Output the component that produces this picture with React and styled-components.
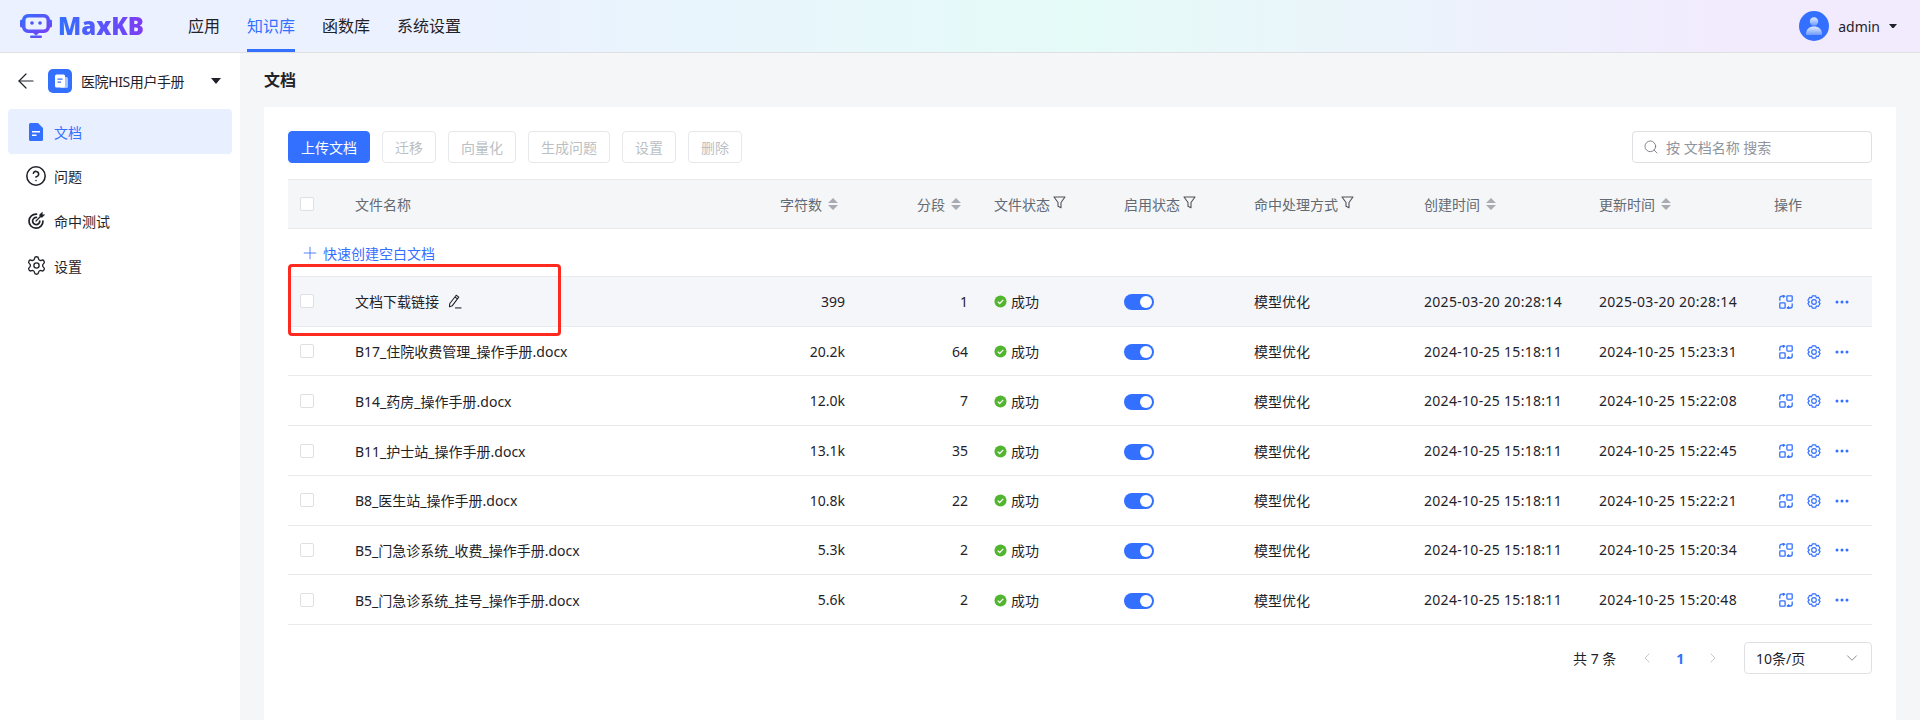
import styled, { createGlobalStyle } from "styled-components"
import { ArrowLeft, ChevronDown, ChevronLeft, ChevronRight, CircleHelp, Plus, Search, Settings } from "lucide-react"

const docs = [
    { name: "文档下载链接", chars: "399", parts: "1", created: "2025-03-20 20:28:14", updated: "2025-03-20 20:28:14", hover: true },
    { name: "B17_住院收费管理_操作手册.docx", chars: "20.2k", parts: "64", created: "2024-10-25 15:18:11", updated: "2024-10-25 15:23:31" },
    { name: "B14_药房_操作手册.docx", chars: "12.0k", parts: "7", created: "2024-10-25 15:18:11", updated: "2024-10-25 15:22:08" },
    { name: "B11_护士站_操作手册.docx", chars: "13.1k", parts: "35", created: "2024-10-25 15:18:11", updated: "2024-10-25 15:22:45" },
    { name: "B8_医生站_操作手册.docx", chars: "10.8k", parts: "22", created: "2024-10-25 15:18:11", updated: "2024-10-25 15:22:21" },
    { name: "B5_门急诊系统_收费_操作手册.docx", chars: "5.3k", parts: "2", created: "2024-10-25 15:18:11", updated: "2024-10-25 15:20:34" },
    { name: "B5_门急诊系统_挂号_操作手册.docx", chars: "5.6k", parts: "2", created: "2024-10-25 15:18:11", updated: "2024-10-25 15:20:48" },
]

const Caret = ({ size = 10 }) => (
    <svg width={size} height={size * 0.6} viewBox="0 0 10 6"><path d="M0 0h10L5 6z" fill="currentColor" /></svg>
)

const SortIcon = () => (
    <SortMark width="10" height="12" viewBox="0 0 10 12">
        <path d="M5 0l5 5H0zM0 7h10l-5 5z" fill="currentColor" />
    </SortMark>
)

const FilterIcon = () => (
    <FilterMark width="13" height="13" viewBox="0 0 13 13" fill="none" stroke="currentColor" strokeWidth="1.100">
        <path d="M1 1h11L8 6.500v5.200L5 10.200V6.500z" strokeLinejoin="round" />
    </FilterMark>
)

const GridSyncIcon = () => (
    <svg width="14" height="14" viewBox="0 0 14 14" fill="none" stroke="currentColor" strokeWidth="1.300">
        <rect x="7.900" y="0.800" width="5.300" height="5.300" rx="0.800" />
        <rect x="0.800" y="7.900" width="5.300" height="5.300" rx="0.800" />
        <path d="M0.800 5.800V3.200a2 2 0 0 1 2-2h2.600M3.900 0L5.600 1.200 3.900 2.600" />
        <path d="M13.200 8.400V11a2 2 0 0 1-2 2H8.600M10.100 11.600L8.400 13l1.700 1.200" />
    </svg>
)

const GearIcon = () => (
    <svg width="14" height="14" viewBox="1.200 0.800 11.600 12" fill="none" stroke="currentColor" strokeWidth="1" strokeLinejoin="round">
        <path d="M5.500 0.800h3l.5 1.700 1.700-.5 1.500 2.600-1.200 1.400 1.200 1.300-1.500 2.600-1.700-.5-.5 1.800h-3l-.5-1.800-1.700.5L1.800 7.300 3 6 1.800 4.600 3.300 2 5 2.500z" transform="translate(0 0.800)" />
        <circle cx="7" cy="6.800" r="2" />
    </svg>
)

const DotsIcon = () => (
    <svg width="14" height="14" viewBox="0 0 14 14" fill="currentColor">
        <circle cx="2" cy="7" r="1.500" />
        <circle cx="7" cy="7" r="1.500" />
        <circle cx="12" cy="7" r="1.500" />
    </svg>
)

const PencilIcon = () => (
    <PencilMark width="15" height="15" viewBox="0 0 14 14" fill="none" stroke="currentColor" strokeWidth="1">
        <path d="M8.600 1.200l2.400 1.700-6 8-2.700 1 .2-2.800zM7.400 2.800l2.400 1.800" strokeLinejoin="round" />
        <path d="M7.500 13h6" />
    </PencilMark>
)

const DocFill = () => (
    <svg width="14" height="18" viewBox="0 0 14 18">
        <path d="M1.500 0H9l5 5v11.500a1.500 1.500 0 0 1-1.500 1.500h-11A1.500 1.500 0 0 1 0 16.500v-15A1.500 1.500 0 0 1 1.500 0z" fill="#3370FF" />
        <path d="M3 8h8v1.500H3zM3 11.500h4.500V13H3z" fill="#fff" />
    </svg>
)

const TargetIcon = () => (
    <svg width="18" height="18" viewBox="0 0 18 18" fill="none" stroke="#1F2329" strokeWidth="1.700" strokeLinecap="round">
        <path d="M9.500 2.200A7 7 0 1 0 16 9" />
        <path d="M9.500 5.400A3.600 3.600 0 1 0 12.800 9" />
        <path d="M9 9l4-4M13 5V2.800L15 1v2h2l-2 2z" fill="#1F2329" strokeWidth="1.200" />
    </svg>
)

const BotLogo = () => (
    <svg width="32" height="24" viewBox="0 0 32 24">
        <defs>
            <linearGradient id="botFill" x1="0" y1="0" x2="1" y2="1">
                <stop offset="0" stopColor="#3370FF" />
                <stop offset="1" stopColor="#7F3BF5" />
            </linearGradient>
        </defs>
        <rect x="0" y="5.500" width="3" height="8" rx="1.500" fill="url(#botFill)" />
        <rect x="29" y="5.500" width="3" height="8" rx="1.500" fill="url(#botFill)" />
        <path d="M8 0h16a6 6 0 0 1 6 6v7a6 6 0 0 1-6 6h-5l-3 2.500-3-2.500H8a6 6 0 0 1-6-6V6a6 6 0 0 1 6-6z" fill="url(#botFill)" />
        <rect x="5.500" y="3.500" width="21" height="12" rx="3" fill="#EBF1FF" />
        <circle cx="12" cy="9" r="1.800" fill="#4F55F5" />
        <circle cx="20" cy="9" r="1.800" fill="#4F55F5" />
        <rect x="10" y="21.500" width="12" height="2.500" rx="1.200" fill="url(#botFill)" />
    </svg>
)

const KbIcon = () => (
    <svg width="24" height="24" viewBox="0 0 24 24">
        <rect width="24" height="24" rx="5" fill="#3370FF" />
        <rect x="12" y="8" width="8" height="11" rx="1.500" fill="#A8C4FF" />
        <rect x="7" y="5.500" width="10" height="13" rx="1.500" fill="#fff" />
        <path d="M9.500 9.500h5v1.300h-5zM9.500 12.500h3.500v1.300H9.500z" fill="#3370FF" />
    </svg>
)

const AvatarIcon = () => (
    <svg width="30" height="30" viewBox="0 0 30 30">
        <defs>
            <linearGradient id="avatarBody" x1="0" y1="0" x2="0" y2="1">
                <stop offset="0" stopColor="#E3ECFF" />
                <stop offset="1" stopColor="#6E9BFF" />
            </linearGradient>
        </defs>
        <circle cx="15" cy="15" r="15" fill="#3370FF" />
        <circle cx="15" cy="10.500" r="4.200" fill="url(#avatarBody)" />
        <path d="M7 23c0-5 3.500-7.500 8-7.500s8 2.500 8 7.500c0 .8-.5 1-1 1H8c-.5 0-1-.2-1-1z" fill="url(#avatarBody)" />
    </svg>
)

const App = () => {
    return (
        <>
            <GlobalStyle />
            <TopBar>
                <Logo>
                    <BotLogo />
                    <LogoText>MaxKB</LogoText>
                </Logo>
                <Nav>
                    <NavItem>应用</NavItem>
                    <NavItem $active>知识库</NavItem>
                    <NavItem>函数库</NavItem>
                    <NavItem>系统设置</NavItem>
                </Nav>
                <User>
                    <AvatarIcon />
                    <span>admin</span>
                    <Caret size={8} />
                </User>
            </TopBar>
            <Body>
                <Side>
                    <KbPicker>
                        <ArrowLeft size={24} strokeWidth={1.200} />
                        <KbIcon />
                        <KbName>医院HIS用户手册</KbName>
                        <Caret />
                    </KbPicker>
                    <Menu>
                        <MenuItem $active><MenuGlyph><DocFill /></MenuGlyph>文档</MenuItem>
                        <MenuItem><MenuGlyph><CircleHelp size={22} strokeWidth={1.700} /></MenuGlyph>问题</MenuItem>
                        <MenuItem><MenuGlyph><TargetIcon /></MenuGlyph>命中测试</MenuItem>
                        <MenuItem><MenuGlyph><Settings size={21} strokeWidth={1.500} /></MenuGlyph>设置</MenuItem>
                    </Menu>
                </Side>
                <Main>
                    <PageTitle>文档</PageTitle>
                    <Card>
                        <Toolbar>
                            <PrimaryButton>上传文档</PrimaryButton>
                            <GhostButton>迁移</GhostButton>
                            <GhostButton>向量化</GhostButton>
                            <GhostButton>生成问题</GhostButton>
                            <GhostButton>设置</GhostButton>
                            <GhostButton>删除</GhostButton>
                            <SearchBox>
                                <Search size={16} strokeWidth={1.200} />
                                <span>按 文档名称 搜索</span>
                            </SearchBox>
                        </Toolbar>
                        <HeadRow>
                            <Cell><CheckBox /></Cell>
                            <Cell>文件名称</Cell>
                            <Cell $right>字符数<SortIcon /></Cell>
                            <Cell $right>分段<SortIcon /></Cell>
                            <Cell>文件状态<FilterIcon /></Cell>
                            <Cell>启用状态<FilterIcon /></Cell>
                            <Cell>命中处理方式<FilterIcon /></Cell>
                            <Cell>创建时间<SortIcon /></Cell>
                            <Cell>更新时间<SortIcon /></Cell>
                            <Cell>操作</Cell>
                        </HeadRow>
                        <QuickRow>
                            <Plus size={20} strokeWidth={1} />
                            快速创建空白文档
                        </QuickRow>
                        {docs.map((doc) => (
                            <DocRow key={doc.name} $hover={doc.hover}>
                                <Cell><CheckBox /></Cell>
                                <Cell>{doc.name}{doc.hover && <PencilIcon />}</Cell>
                                <Cell $right>{doc.chars}</Cell>
                                <Cell $right>{doc.parts}</Cell>
                                <Cell><StatusDot viewBox="0 0 14 14"><circle cx="7" cy="7" r="6.500" fill="#52B52F" /><path d="M4 7.200l2.100 2L10 5.300" fill="none" stroke="#fff" strokeWidth="1.300" /></StatusDot>成功</Cell>
                                <Cell><Toggle /></Cell>
                                <Cell>模型优化</Cell>
                                <TimeCell>{doc.created}</TimeCell>
                                <TimeCell>{doc.updated}</TimeCell>
                                <Actions><GridSyncIcon /><GearIcon /><DotsIcon /></Actions>
                            </DocRow>
                        ))}
                        <Pager>
                            <span>共 7 条</span>
                            <PagerArrow><ChevronLeft size={16} strokeWidth={1} /></PagerArrow>
                            <PageNo>1</PageNo>
                            <PagerArrow><ChevronRight size={16} strokeWidth={1} /></PagerArrow>
                            <PageSize>10条/页<ChevronDown size={18} strokeWidth={1} /></PageSize>
                        </Pager>
                    </Card>
                </Main>
            </Body>
            <RedBox />
        </>
    )
}

export default App


const GlobalStyle = createGlobalStyle`
    html, body{
        margin:0;
        height:100%;
        overflow:hidden;
    }
    body{
        font-family:"Noto Sans", "Noto Sans CJK SC", sans-serif;
        font-size:14px;
        color:#1F2329;
    }
    *{
        box-sizing:border-box;
    }
`

const TopBar = styled.header`
    position:relative;
    display:flex;
    align-items:center;
    height:53px;
    padding:0 23px 0 20px;
    background:linear-gradient(90deg, #EBF1FF 24.34%, #E5FBF8 56.18%, #F2EBFE 90.18%);
    border-bottom:1px solid #DEE0E3;
`

const Logo = styled.div`
    display:flex;
    align-items:center;
    width:168px;
    height:24px;
    gap:6px;
`

const LogoText = styled.span`
    font-family:"Noto Sans", sans-serif;
    font-size:24px;
    font-weight:900;
    line-height:24px;
    background:linear-gradient(90deg, #3370FF, #7F3BF5);
    -webkit-background-clip:text;
    background-clip:text;
    color:transparent;
`

const Nav = styled.nav`
    display:flex;
    gap:27px;
    height:52px;
`

const NavItem = styled.a`
    display:block;
    height:52px;
    line-height:52px;
    font-size:16px;
    color:${(p) => (p.$active ? "#3370FF" : "#1F2329")};
    border-bottom:3px solid ${(p) => (p.$active ? "#3370FF" : "transparent")};
`

const User = styled.div`
    display:flex;
    align-items:center;
    margin-left:auto;
    gap:9px;
    font-size:14px;
    color:#1F2329;
`

const Body = styled.div`
    display:flex;
    height:667px;
`

const Side = styled.aside`
    width:240px;
    flex:none;
    background:#fff;
`

const KbPicker = styled.div`
    display:flex;
    align-items:center;
    height:56px;
    padding:0 19px 0 14px;
    svg:nth-child(2){
        margin-left:10px;
    }
    svg:last-child{
        margin-left:auto;
    }
`

const KbName = styled.span`
    margin-left:9px;
    font-size:14px;
    letter-spacing:-.4px;
`

const Menu = styled.div`
    padding:0 8px;
`

const MenuItem = styled.div`
    display:flex;
    align-items:center;
    height:${(p) => (p.$active ? "45px" : "44.7px")};
    padding-left:19px;
    gap:9px;
    border-radius:4px;
    color:${(p) => (p.$active ? "#3370FF" : "#1F2329")};
    background:${(p) => (p.$active ? "#E8EFFF" : "transparent")};
`

const MenuGlyph = styled.span`
    display:flex;
    align-items:center;
    justify-content:center;
    flex:none;
    width:18px;
    svg{
        flex:none;
    }
`

const Main = styled.main`
    flex:1;
    padding:0 24px;
    background:#F5F6F7;
`

const PageTitle = styled.h2`
    margin:0;
    height:54px;
    line-height:54px;
    font-size:16px;
    font-weight:700;
`

const Card = styled.section`
    height:613px;
    padding:24px;
    background:#fff;
`

const Toolbar = styled.div`
    display:flex;
    align-items:center;
    gap:12px;
    height:32px;
    margin-bottom:16px;
`

const PrimaryButton = styled.button`
    height:32px;
    padding:0 12px;
    font:inherit;
    color:#fff;
    background:#3370FF;
    border:1px solid #3370FF;
    border-radius:4px;
`

const GhostButton = styled.button`
    height:32px;
    padding:0 12px;
    font:inherit;
    color:#BBBFC4;
    background:#fff;
    border:1px solid #E6E8EB;
    border-radius:4px;
`

const SearchBox = styled.div`
    display:flex;
    align-items:center;
    gap:7px;
    width:240px;
    height:32px;
    margin-left:auto;
    padding:0 10px;
    color:#8F959E;
    border:1px solid #DEE0E3;
    border-radius:4px;
    font-size:14px;
    svg{
        color:#646A73;
    }
`

const COLUMNS = "55px 402px 114px 123px 130px 130px 170px 175px 175px 110px"

const HeadRow = styled.div`
    display:grid;
    grid-template-columns:${COLUMNS};
    align-items:center;
    height:50px;
    padding-bottom:1px;
    color:#646A73;
    background:#F5F6F7;
    border-top:1px solid #E8EAED;
    border-bottom:1px solid #E8EAED;
`

const Cell = styled.div`
    display:flex;
    align-items:center;
    justify-content:${(p) => (p.$right ? "flex-end" : "flex-start")};
    padding:0 ${(p) => (p.$right ? "14px" : "12px")} 0 12px;
    white-space:nowrap;
    min-width:0;
`

const TimeCell = styled(Cell)`
    letter-spacing:.3px;
`

const SortMark = styled.svg`
    margin-left:6px;
    margin-right:7px;
    color:#A8ABB2;
`

const FilterMark = styled.svg`
    margin-left:3px;
    margin-top:-2px;
    color:#4E5359;
`

const CheckBox = styled.span`
    display:inline-block;
    width:14px;
    height:14px;
    background:#fff;
    border:1px solid #DEE0E3;
    border-radius:2px;
`

const QuickRow = styled.div`
    display:flex;
    align-items:center;
    gap:3px;
    height:48px;
    padding-left:12px;
    color:#3370FF;
    border-bottom:1px solid #E8EAED;
`

const DocRow = styled.div`
    display:grid;
    grid-template-columns:${COLUMNS};
    align-items:center;
    height:49.72px;
    background:${(p) => (p.$hover ? "#F5F6FA" : "#fff")};
    border-bottom:1px solid #E8EAED;
`

const PencilMark = styled.svg`
    margin-left:8px;
    color:#1F2329;
`

const StatusDot = styled.svg`
    width:13px;
    height:13px;
    margin:1px 4px 0 0;
    flex:none;
`

const Toggle = styled.span`
    position:relative;
    display:inline-block;
    width:30px;
    height:16px;
    margin-top:2px;
    border-radius:8px;
    background:#3370FF;
    &:after{
        content:'';
        position:absolute;
        top:2px;
        right:2px;
        width:12px;
        height:12px;
        border-radius:50%;
        background:#fff;
    }
`

const Actions = styled(Cell)`
    gap:14px;
    padding-top:1px;
    padding-left:17px;
    color:#3370FF;
`

const Pager = styled.div`
    display:flex;
    align-items:center;
    height:32px;
    margin-top:17px;
    padding-left:1285px;
`

const PagerArrow = styled.span`
    display:flex;
    color:#A8ABB2;
    &:nth-child(2){
        margin-left:23px;
    }
`

const PageNo = styled.b`
    width:50px;
    text-align:center;
    color:#3370FF;
    font-weight:700;
`

const PageSize = styled.div`
    display:flex;
    align-items:center;
    justify-content:space-between;
    width:128px;
    height:32px;
    margin-left:auto;
    padding:0 10px 0 11px;
    border:1px solid #DEE0E3;
    border-radius:4px;
    svg{
        color:#646A73;
    }
`

const RedBox = styled.div`
    position:absolute;
    left:288px;
    top:264px;
    width:273px;
    height:72px;
    border:3px solid #FF2A1F;
    border-radius:4px;
`
